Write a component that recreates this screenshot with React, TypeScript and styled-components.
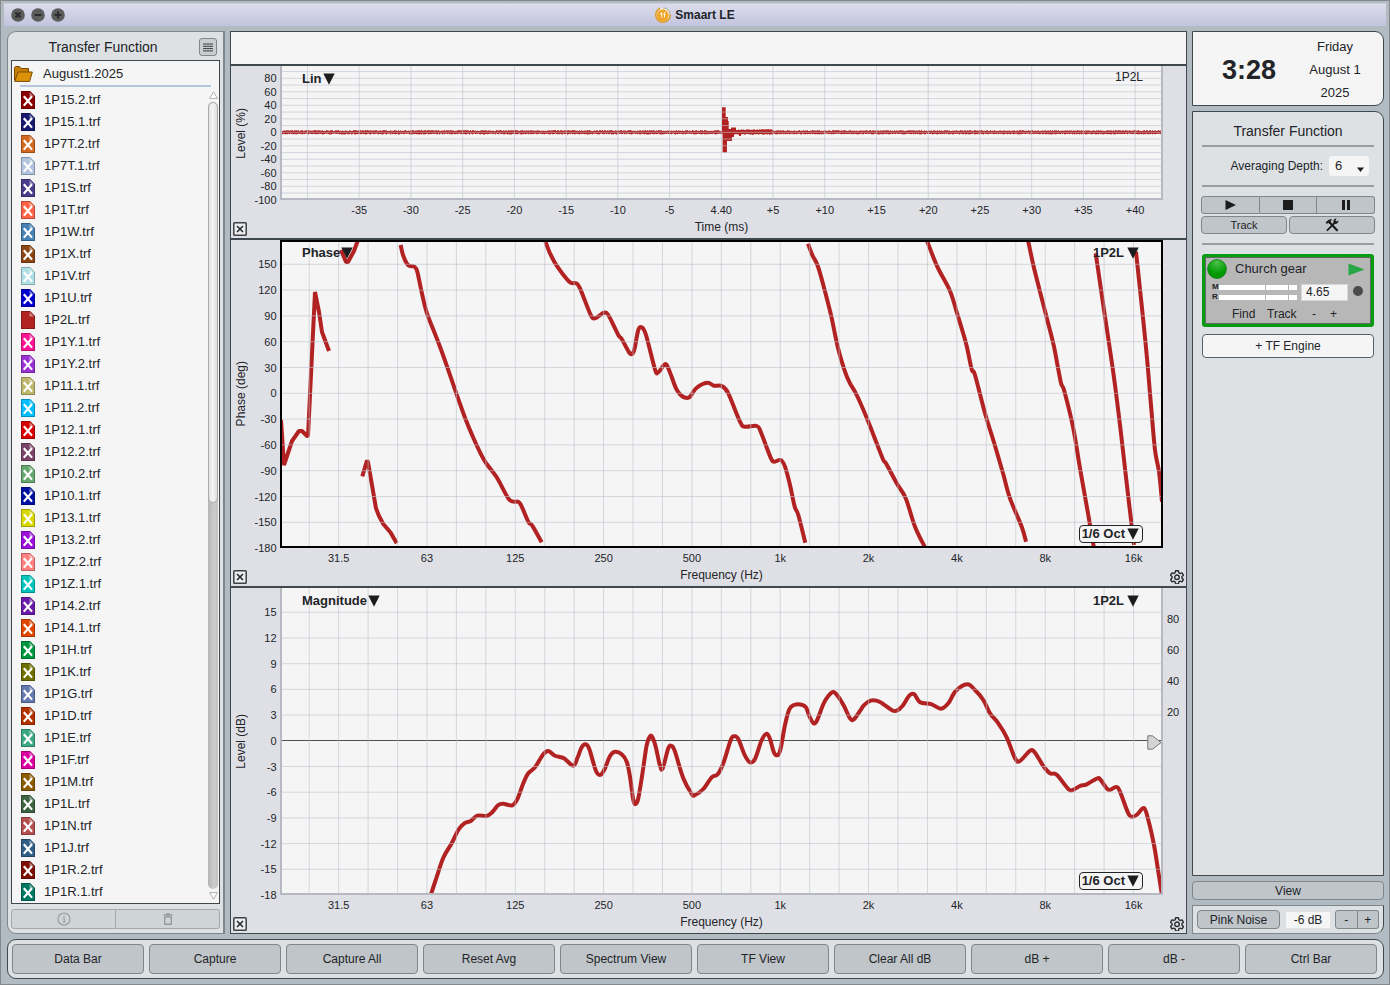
import React from "react";
import styled, { createGlobalStyle } from "styled-components";

const ink = "#222428";
const edge = "#3f484c";
const softEdge = "#7e878b";
const panel = "#dde1e4";
const control = "#bfc5c9";
const paper = "#f5f5f5";
const traceColor = "#b22222";

const GlobalStyle = createGlobalStyle`
  * { box-sizing: border-box; }
  body {
    margin: 0;
    color: ${ink};
    font-family: "Liberation Sans", Arial, Helvetica, sans-serif;
    font-size: 12px;
    line-height: 16px;
  }
  button, input, select { font: inherit; color: inherit; margin: 0; padding: 0; }
  svg { display: block; }
`;

/* ---------- window ---------- */

const Window = styled.div`
  min-height: 100vh;
  display: flex;
  flex-direction: column;
  padding: 2px 3px;
  background: #b2bbc1;
  border: 1px solid #83898d;
`;

const TitleBar = styled.header`
  position: relative;
  height: 23px;
  display: flex;
  align-items: center;
  justify-content: center;
  gap: 4px;
  border-top: 1px solid #c9cdd9;
  background: linear-gradient(#dcdcec, #c2c4de);
`;

const WindowTitle = styled.h1`
  margin: 0;
  font-size: 12px;
  font-weight: bold;
`;

const WindowButtons = styled.div`
  position: absolute;
  left: 7px;
  display: flex;
  gap: 6px;
`;

const WindowButton = styled.button`
  width: 14px;
  height: 14px;
  border: 0;
  background: none;
`;

const Workspace = styled.main`
  flex: 1;
  display: grid;
  grid-template-columns: 218px minmax(0, 1fr) 192px;
  gap: 5px;
  padding: 5px 2px 5px 3px;
`;

/* ---------- data bar ---------- */

const DataPanel = styled.section`
  display: flex;
  flex-direction: column;
  padding: 0 3px 4px;
  background: ${panel};
  border: 1px solid ${softEdge};
  border-right-width: 2px;
  border-radius: 9px 0 0 9px;
`;

const DataHeader = styled.div`
  height: 28px;
  display: flex;
  align-items: center;
  gap: 4px;
  padding: 2px 3px 0 0;
`;

const PanelTitle = styled.h2`
  flex: 1;
  margin: 0;
  text-align: center;
  font-size: 14px;
  font-weight: normal;
`;

const MenuButton = styled.button`
  width: 18px;
  height: 18px;
  display: grid;
  place-items: center;
  border: 1px solid ${softEdge};
  border-radius: 3px;
  background: #c9ced1;
`;

const DataBox = styled.div`
  flex: 1;
  background: ${paper};
  border: 1px solid ${edge};
`;

const FolderRow = styled.div`
  display: flex;
  align-items: center;
  gap: 10px;
  height: 26px;
  margin: 0 8px 2px 2px;
  font-size: 13px;
  position: relative;
  &::after {
    content: "";
    position: absolute;
    left: 6px;
    right: 0;
    bottom: 0;
    height: 2px;
    background: #b7c7da;
  }
`;

const FileArea = styled.div`
  display: flex;
`;

const FileList = styled.ul`
  flex: 1;
  margin: 0;
  padding: 0;
  list-style: none;
`;

const FileRow = styled.li`
  height: 22px;
  display: flex;
  align-items: center;
  gap: 9px;
  padding-left: 9px;
  font-size: 13px;
`;

const ScrollBar = styled.div`
  width: 12px;
  display: flex;
  flex-direction: column;
  align-items: center;
  gap: 3px;
  padding: 2px 0 3px;
`;

const ScrollTrack = styled.div`
  flex: 1;
  width: 10px;
  border-radius: 5px;
  background: linear-gradient(90deg, #b4b4b4, #cdcdcd 60%, #c0c0c0);
`;

const ScrollThumb = styled.div`
  height: 51%;
  border: 1px solid #a9a9a9;
  border-radius: 5px;
  background: linear-gradient(90deg, #e2e2e2, #f4f4f4 50%, #dcdcdc);
`;

const SplitRow = styled.div`
  display: flex;
`;

const DataFooter = styled(SplitRow)`
  margin-top: 5px;
`;

const SplitButton = styled.button<{ $h: number; $muted?: boolean }>`
  flex: 1;
  height: ${(p) => p.$h}px;
  display: grid;
  place-items: center;
  color: ${(p) => (p.$muted ? "#979d9f" : ink)};
  background: ${(p) => (p.$muted ? "#cfd4d7" : control)};
  border: 1px solid ${(p) => (p.$muted ? "#a3a9ac" : softEdge)};
  &:not(:first-child) { border-left-width: 0; }
  &:first-child { border-radius: 3px 0 0 3px; }
  &:last-child { border-radius: 0 3px 3px 0; }
`;

/* ---------- charts ---------- */

const ChartStack = styled.section`
  display: grid;
  grid-template-rows: 34px minmax(0, 174fr) minmax(0, 348fr) minmax(0, 345fr);
  border: 1px solid ${edge};
  background: #dfe0e6;
`;

const CursorStrip = styled.div`
  background: ${paper};
  border-bottom: 2px solid ${edge};
`;

/* Size containment: each panel takes its height from the stack, not from its drawings. */
const ChartPanel = styled.div<{ $last?: boolean }>`
  contain: size;
  display: grid;
  grid-template-columns: 49px minmax(0, 1fr) 23px;
  grid-template-rows: minmax(0, 1fr) 38px;
  border-bottom: ${(p) => (p.$last ? 0 : 2)}px solid ${edge};
`;

const YGutter = styled.div`
  display: flex;
  align-items: center;
  min-height: 0;
`;

const YTitle = styled.span`
  width: 20px;
  display: flex;
  align-items: center;
  justify-content: center;
  font-size: 12px;
  writing-mode: vertical-rl;
  transform: rotate(180deg);
`;

const TickLayer = styled.svg`
  width: 100%;
  height: 100%;
  overflow: visible;
  font-size: 11px;
  fill: ${ink};
`;

const YTicks = styled(TickLayer)`
  flex: 1;
  min-width: 0;
`;

const PlotBox = styled.div<{ $active?: boolean }>`
  position: relative;
  min-height: 0;
  background: ${paper};
  &::after {
    content: "";
    position: absolute;
    inset: 0;
    pointer-events: none;
    border: 2px solid ${(p) => (p.$active ? "#000" : "#b6b9c1")};
    border-top-width: ${(p) => (p.$active ? 2 : 0)}px;
  }
`;

const PlotSvg = styled.svg`
  position: absolute;
  inset: 0;
  width: 100%;
  height: 100%;
`;

const PlotMenu = styled.button<{ $at: "left" | "right" | "corner"; $gap?: number }>`
  position: absolute;
  z-index: 1;
  display: flex;
  align-items: center;
  gap: ${(p) => p.$gap ?? 1}px;
  height: 18px;
  font-size: 13px;
  font-weight: bold;
  background: ${(p) => (p.$at === "corner" ? paper : "none")};
  border: ${(p) => (p.$at === "corner" ? `1px solid ${ink}` : "0")};
  border-radius: 4px;
  padding: ${(p) => (p.$at === "corner" ? "0 3px 0 2px" : "0")};
  ${(p) => (p.$at === "left" ? "left: 22px;" : "")}
  ${(p) => (p.$at === "right" ? "right: 24px;" : "")}
  ${(p) => (p.$at === "corner" ? "right: 20px; bottom: 5px;" : "top: 4px;")}
`;

const PlotName = styled.span`
  position: absolute;
  z-index: 1;
  top: 3px;
  right: 20px;
  font-size: 12px;
`;

const LevelHandle = styled.svg`
  position: absolute;
  z-index: 1;
  right: 1px;
  top: 50%;
  margin-top: -7px;
`;

const AxisCorner = styled.div<{ $end?: boolean }>`
  display: flex;
  align-items: flex-end;
  justify-content: ${(p) => (p.$end ? "flex-end" : "flex-start")};
  padding: 2px;
`;

const IconButton = styled.button`
  border: 0;
  background: none;
`;

const XGutter = styled.div`
  display: flex;
  flex-direction: column;
`;

const XTicks = styled(TickLayer)`
  height: 19px;
`;

const XTitle = styled.span`
  text-align: center;
  font-size: 12px;
`;

/* ---------- control bar ---------- */

const ControlBar = styled.aside`
  display: flex;
  flex-direction: column;
  gap: 5px;
`;

const ClockCard = styled.div`
  height: 75px;
  display: grid;
  grid-template-columns: 1fr 1fr;
  align-items: center;
  padding: 2px 5px 0 13px;
  text-align: center;
  background: ${paper};
  border: 1px solid ${edge};
  border-radius: 0 9px 9px 0;
`;

const ClockTime = styled.time`
  font-size: 27px;
  line-height: 32px;
  font-weight: bold;
`;

const ClockDate = styled.div`
  font-size: 13px;
  line-height: 23px;
`;

const ControlPanel = styled.div`
  flex: 1;
  display: flex;
  flex-direction: column;
  padding: 10px 9px;
  background: ${panel};
  border: 1px solid ${edge};
  border-radius: 0 9px 0 0;
`;

const ControlTitle = styled.h2`
  margin: 0 0 5px;
  line-height: 18px;
  text-align: center;
  font-size: 14px;
  font-weight: normal;
`;

const Rule = styled.hr`
  width: 100%;
  height: 2px;
  margin: 0;
  border: 0;
  background: #979da0;
`;

const DepthRow = styled.label`
  height: 38px;
  display: flex;
  align-items: center;
  justify-content: flex-end;
  gap: 6px;
  padding-right: 5px;
`;

const SelectWrap = styled.span`
  position: relative;
  & svg { position: absolute; right: 5px; top: 11px; pointer-events: none; }
`;

const DepthSelect = styled.select`
  display: block;
  width: 40px;
  height: 20px;
  padding-left: 6px;
  font-size: 13px;
  appearance: none;
  border: 0;
  border-radius: 3px;
  background: ${paper};
`;

const Transport = styled.div`
  display: flex;
  flex-direction: column;
  gap: 2px;
  margin: 9px -1px;
`;

const PairRow = styled.div`
  display: grid;
  grid-template-columns: 1fr 1fr;
  gap: 2px;
`;

const Button = styled.button<{ $h: number; $size?: number; $light?: boolean }>`
  height: ${(p) => p.$h}px;
  display: grid;
  place-items: center;
  font-size: ${(p) => p.$size ?? 12}px;
  background: ${(p) => (p.$light ? paper : control)};
  border: 1px solid ${(p) => (p.$light ? "#596165" : softEdge)};
  border-radius: 4px;
`;

const EngineCard = styled.div`
  margin: 9px 0 7px;
  border: 3px solid #089c10;
  border-radius: 3px;
  background: #b7b7b7;
  box-shadow: inset 0 0 0 1px #5d6a5f;
  padding: 1px;
`;

const EngineHead = styled.div`
  height: 22px;
  display: grid;
  grid-template-columns: 20px 1fr 18px;
  align-items: center;
  gap: 8px;
  padding: 0 4px 0 1px;
  font-size: 13px;
`;

const EngineMeters = styled.div`
  height: 24px;
  display: flex;
  align-items: center;
  gap: 4px;
  padding: 0 6px;
`;

const MeterBlock = styled.div`
  display: flex;
  flex-direction: column;
`;

const MeterRow = styled.div`
  height: 10px;
  display: grid;
  grid-template-columns: 7px 78px;
  align-items: center;
  font-size: 8px;
  line-height: 10px;
  font-weight: bold;
`;

const MeterBar = styled.div`
  height: 5px;
  display: grid;
  grid-template-columns: 46px 22px 8px;
  gap: 1px;
  & > i { background: #fff; }
`;

const DelayInput = styled.input`
  width: 47px;
  height: 17px;
  padding: 0 4px;
  font-size: 12px;
  background: ${paper};
  border: 1px solid #d8d8d8;
`;

const EngineActions = styled.div`
  height: 19px;
  display: flex;
  align-items: center;
  padding-left: 26px;
`;

const TextButton = styled.button<{ $w: number }>`
  width: ${(p) => p.$w}px;
  height: 18px;
  text-align: left;
  border: 0;
  background: none;
`;

const GeneratorBox = styled.div`
  height: 29px;
  display: flex;
  align-items: center;
  padding: 0 4px;
  background: ${panel};
  border: 1px solid ${softEdge};
  border-right-color: ${edge};
  border-radius: 0 0 9px 0;
`;

const NoiseButton = styled(Button)`
  width: 83px;
`;

const GainOutput = styled.output`
  flex: 1;
  margin: 0 5px 0 6px;
  text-align: center;
  background: ${paper};
`;

const StepPair = styled(SplitRow)`
  width: 44px;
`;

/* ---------- command bar ---------- */

const CommandBar = styled.nav`
  display: grid;
  grid-template-columns: repeat(10, minmax(0, 1fr));
  gap: 5px;
  margin: 0 2px 3px 3px;
  padding: 4px 6px 4px 4px;
  background: ${panel};
  border: 1px solid ${edge};
  border-radius: 9px;
`;

/* ---------- data ---------- */

const files: [string, string][] = [
  ["1P15.2.trf", "#8b0000"],
  ["1P15.1.trf", "#191970"],
  ["1P7T.2.trf", "#d2691e"],
  ["1P7T.1.trf", "#b0c4de"],
  ["1P1S.trf", "#483d8b"],
  ["1P1T.trf", "#ff6347"],
  ["1P1W.trf", "#4682b4"],
  ["1P1X.trf", "#8b4513"],
  ["1P1V.trf", "#b0e0e6"],
  ["1P1U.trf", "#0000cd"],
  ["1P2L.trf", "#b22222"],
  ["1P1Y.1.trf", "#ff1493"],
  ["1P1Y.2.trf", "#9b32d2"],
  ["1P11.1.trf", "#bdb76b"],
  ["1P11.2.trf", "#00bfff"],
  ["1P12.1.trf", "#d80000"],
  ["1P12.2.trf", "#7a4468"],
  ["1P10.2.trf", "#66a870"],
  ["1P10.1.trf", "#0010a0"],
  ["1P13.1.trf", "#d8d800"],
  ["1P13.2.trf", "#9a10d8"],
  ["1P1Z.2.trf", "#ff8080"],
  ["1P1Z.1.trf", "#00c4bc"],
  ["1P14.2.trf", "#6a1aa8"],
  ["1P14.1.trf", "#e04800"],
  ["1P1H.trf", "#009640"],
  ["1P1K.trf", "#707000"],
  ["1P1G.trf", "#6478b0"],
  ["1P1D.trf", "#b43200"],
  ["1P1E.trf", "#3ca882"],
  ["1P1F.trf", "#dc00a0"],
  ["1P1M.trf", "#8c5a00"],
  ["1P1L.trf", "#3c6440"],
  ["1P1N.trf", "#b45050"],
  ["1P1J.trf", "#325f87"],
  ["1P1R.2.trf", "#7d0f05"],
  ["1P1R.1.trf", "#007864"],
];

const commands = [
  "Data Bar", "Capture", "Capture All", "Reset Avg", "Spectrum View",
  "TF View", "Clear All dB", "dB +", "dB -", "Ctrl Bar",
];

/* Horizontal extent of the trace coordinates. */
const X0 = 280;
const XW = 883;

type Tick = { at: number; text?: string };
type Scale = { top: number; height: number };

const impulseScale: Scale = { top: 66, height: 134 };
const phaseScale: Scale = { top: 240, height: 308 };
const magScale: Scale = { top: 588, height: 307 };

const px = (x: number) => `${((x - X0) / XW) * 100}%`;
const py = (s: Scale, y: number) => `${((y - s.top) / s.height) * 100}%`;

const range = (n: number) => Array.from({ length: n }, (_, i) => i);

const octaves = ["31.5", "63", "125", "250", "500", "1k", "2k", "4k", "8k", "16k"];
const freqTicks: Tick[] = range(29).map((i) => ({
  at: 309.2 + i * 29.44,
  text: i % 3 === 1 ? octaves[(i - 1) / 3] : undefined,
}));

const timeTicks: Tick[] = range(17).map((i) => {
  const ms = (i - 8) * 5;
  return {
    at: 721.3 + (i - 8) * 51.73,
    text: i === 0 ? undefined : ms === 0 ? "4.40" : ms > 0 ? `+${ms}` : `${ms}`,
  };
});

const percentTicks: Tick[] = range(20).map((i) => {
  const v = 90 - i * 10;
  return { at: 132.3 - v * 0.675, text: v % 20 === 0 ? `${v}` : undefined };
});

const phaseTicks: Tick[] = range(12).map((i) => ({ at: 264.3 + i * 25.8, text: `${150 - i * 30}` }));
const magTicks: Tick[] = range(12).map((i) => ({ at: 612.3 + i * 25.7, text: `${15 - i * 3}` }));
const coherenceTicks: Tick[] = range(4).map((i) => ({ at: 619 + i * 31, text: `${80 - i * 20}` }));

type Points = number[];

const phaseTraces: { smooth: boolean; pts: Points }[] = [
  { smooth: false, pts: [281, 420, 284, 465, 288, 453, 292, 441, 299, 431, 302, 431, 307, 436, 308, 436, 315, 292, 319, 312, 322, 332, 329, 351] },
  { smooth: false, pts: [341, 250, 346, 262, 348, 262, 354, 251, 358, 240] },
  { smooth: true, pts: [400.7, 245, 403, 255, 408, 265, 414.3, 266.7, 417.3, 271.7, 421.7, 292.3, 427, 313.3, 438.3, 342.3, 447.7, 368.3, 456.3, 393.3, 465, 417.7, 473.3, 437.7, 481.7, 455.7, 486.7, 464, 496.7, 477.3, 508.3, 498.3, 514.3, 501.7, 520, 503.3, 528.3, 521.7, 532.3, 525.7, 541.7, 542.3] },
  { smooth: false, pts: [362.3, 476.3, 367, 460.7, 368, 462, 371.7, 483.3, 376, 508.3, 379, 516, 383.3, 524, 390.7, 532.7, 396.7, 543.3] },
  { smooth: true, pts: [545, 240, 550, 253.3, 556.7, 265.7, 569.3, 281.7, 576, 283.3, 580, 288.3, 590.7, 315, 595, 318.3, 599.3, 315.7, 604, 312.7, 608.3, 315, 618.3, 335, 621.7, 339, 629.3, 352.7, 632.7, 353.3, 635, 346.7, 638.3, 330, 641.7, 327.3, 646, 335, 655, 369.3, 658.3, 372.3, 664, 365, 666.7, 365, 670.7, 374.3, 676, 388.3, 680.7, 395, 685.7, 397.7, 690, 396.7, 696.7, 387.7, 707.3, 382.7, 714, 385.7, 721.7, 386, 728.3, 393.3, 740, 421.7, 745, 426.7, 756.7, 426, 760.7, 431.7, 770.7, 457.7, 774.3, 461.7, 780.7, 460, 785, 466.7, 790, 485, 794.7, 506.7, 798.3, 515, 805.3, 542.7] },
  { smooth: true, pts: [808, 243.7, 812.3, 255, 817.7, 265.7, 823.3, 285, 831, 315, 837.7, 346.7, 845, 371.7, 850, 383.3, 856.7, 395, 868.3, 421.7, 876.7, 443.3, 883.3, 460, 886, 463.3, 897.3, 484.3, 905.7, 498.3, 915, 526.7, 925, 547.3] },
  { smooth: true, pts: [926.7, 240, 937.3, 266.7, 950, 291, 957.3, 314, 966, 343.3, 971.7, 369.3, 975, 375, 985, 413.3, 995, 445.7, 1003.3, 474.3, 1010, 498.3, 1021.7, 526.7, 1026, 541.7] },
  { smooth: true, pts: [1028, 240, 1033.3, 265, 1040, 291.7, 1047.3, 320, 1054, 346.7, 1060.7, 381.7, 1064.3, 391, 1073.3, 428.3, 1080, 468.3, 1088.3, 515, 1093.7, 546.7] },
  { smooth: true, pts: [1095.7, 253.3, 1104, 310, 1112.7, 368.3, 1120, 425, 1126.7, 483.3, 1134, 545] },
  { smooth: true, pts: [1136, 251.7, 1142, 308.3, 1146.7, 355, 1150.7, 401.7, 1155, 450, 1159, 471.7, 1162, 501.7] },
];

const magTrace: Points = [
  431, 894.3, 435.7, 880, 443.3, 857.7, 451.7, 843.3, 458.3, 830, 464.3, 823.3, 470.7, 821, 477.3, 815.7, 486.7, 816,
  491.7, 812.7, 498.3, 805, 503.3, 803.7, 512.3, 805.3, 517.7, 798.3, 523.3, 783.3, 528.3, 773.3, 535, 767.3,
  543.3, 754.3, 548.3, 751, 555, 755.7, 564, 758.3, 573.3, 765.7, 577.3, 758.3, 581.7, 747.3, 585.7, 744.3,
  589.3, 749, 596, 771, 600.7, 774.7, 605, 768.3, 610, 756, 615, 751.7, 621.7, 754.3, 626.7, 761.7, 630, 776.7,
  633.3, 800, 635.7, 804, 638.3, 798.3, 642.7, 771.7, 646.7, 745, 650, 736.3, 652.3, 737, 655.7, 746.7,
  660, 765.7, 662.7, 768.3, 668.3, 748.3, 671.7, 746, 675, 751.7, 683.3, 778.3, 691.7, 794, 695, 795,
  703.3, 789, 711.7, 777.3, 717.7, 774.3, 723.3, 763.3, 730.7, 740, 734.3, 736.3, 738.3, 739, 745, 755.7,
  750, 762.3, 755, 759, 761.7, 740, 766.7, 733.7, 770, 739, 774, 752.7, 778, 755, 780.7, 748.3, 785, 725,
  789.3, 709.3, 794, 705, 801.7, 704.7, 806, 707.3, 809.3, 716, 813.3, 723, 816.7, 721, 823.3, 704.3,
  828.3, 696, 833.3, 692, 838.3, 696.7, 844, 706, 850, 718.3, 854.3, 719, 863.3, 706, 868.3, 701.7,
  872.7, 700.3, 880, 702, 891.7, 710, 896.7, 710.7, 902.7, 705.7, 909.3, 695.7, 914.3, 694.3, 920, 702.3,
  931.7, 704.3, 941, 708.7, 948.3, 703.3, 955.7, 691, 967.3, 684.3, 975, 690, 983.3, 700, 990, 713.3,
  998.3, 723.3, 1006.7, 737.3, 1015, 758.3, 1020, 761, 1030, 750.7, 1035, 752.7, 1043.3, 766, 1050, 773.3,
  1056.7, 774.7, 1068.3, 789, 1072.7, 790, 1080, 786, 1086.7, 784.3, 1097.3, 778.3, 1100.7, 780,
  1108.3, 789.7, 1116, 787, 1120, 791.7, 1128.3, 813.3, 1132.7, 816.7, 1137.3, 814.3, 1144, 808,
  1148.3, 820, 1154, 845, 1158.3, 871.7, 1161.7, 893.3,
];

function linePath(p: Points) {
  let d = `M${p[0]} ${p[1]}`;
  for (let i = 2; i < p.length; i += 2) d += `L${p[i]} ${p[i + 1]}`;
  return d;
}

/* Catmull-Rom spline through the measured points. */
function splinePath(p: Points) {
  const n = p.length / 2;
  const at = (i: number) => {
    const k = Math.max(0, Math.min(n - 1, i));
    return [p[k * 2], p[k * 2 + 1]];
  };
  let d = `M${p[0]} ${p[1]}`;
  for (let i = 0; i < n - 1; i++) {
    const [a, b, c, e] = [at(i - 1), at(i), at(i + 1), at(i + 2)];
    const f = (v: number) => v.toFixed(1);
    d += `C${f(b[0] + (c[0] - a[0]) / 6)} ${f(b[1] + (c[1] - a[1]) / 6)} `;
    d += `${f(c[0] - (e[0] - b[0]) / 6)} ${f(c[1] - (e[1] - b[1]) / 6)} ${c[0]} ${c[1]}`;
  }
  return d;
}

/* Noise floor either side of the impulse: a thin band with a ragged edge. */
function noisePath() {
  let seed = 7;
  const rnd = () => {
    seed = (seed * 16807) % 2147483647;
    return seed / 2147483647;
  };
  let d = "";
  for (let x = 282; x < 1161; x++) {
    const late = x > 725;
    const tail = x > 730 && x < 773 ? 1 : 0;
    const up = 1.2 + rnd() * (late ? 0.8 : 0.9) + tail * 0.9;
    const down = 1.2 + rnd() * (late ? 0.8 : 0.9) + tail * 0.4;
    d += `M${x + 0.5} ${(132.2 - up).toFixed(1)}V${(132.4 + down).toFixed(1)}`;
  }
  return d;
}

/* ---------- drawings ---------- */

const Down = () => (
  <svg width="12" height="12" viewBox="0 0 12 12" aria-hidden="true">
    <path d="M0.3 0.5H11.7L6 11.7Z" fill="#1c1c1e" />
  </svg>
);

const CloseBox = () => (
  <svg width="14" height="14" viewBox="0 0 14 14" aria-hidden="true">
    <rect x="0.8" y="0.8" width="12.4" height="12.4" rx="0.8" fill="#eceef0" stroke="#3d4245" strokeWidth="1.5" />
    <path d="M4 4L10 10M10 4L4 10" stroke="#26292b" strokeWidth="1.6" />
  </svg>
);

const Gear = () => (
  <svg width="14" height="14" viewBox="0 0 24 24" fill="none" stroke="#2b2e31" strokeWidth="2.4" strokeLinejoin="round" aria-hidden="true">
    <path d="M9.6 1.3h4.8l.7 3.4 2.3 1.3 3.3-1.1 2.4 4.1-2.6 2.3v2.6l2.6 2.3-2.4 4.1-3.3-1.1-2.3 1.3-.7 3.4H9.6l-.7-3.4-2.3-1.3-3.3 1.1-2.4-4.1 2.6-2.3v-2.6L.9 9l2.4-4.1L6.6 6l2.3-1.3z" />
    <circle cx="12" cy="12.5" r="3.9" />
  </svg>
);

const FileIcon = ({ color, open }: { color: string; open: boolean }) => (
  <svg width="14" height="18" viewBox="0 0 14 18" aria-hidden="true">
    <path d="M0 0H9L14 5V18H0Z" fill={color} />
    <path d="M0.5 0.5H8.8L13.5 5.2V17.5H0.5Z" fill="none" stroke="#000" strokeOpacity="0.25" />
    <path d="M8.5 1V5.5H13Z" fill="#fff" fillOpacity="0.45" />
    {!open && <path d="M2.8 5.2L11 14.6M11 5.2L2.8 14.6" stroke="#fff" strokeWidth="2.2" />}
  </svg>
);

const FolderIcon = () => (
  <svg width="19" height="16" viewBox="0 0 19 16" stroke="#7a4c00" strokeLinejoin="round" aria-hidden="true">
    <path d="M0.5 14.5V1.5L1.5 0.5H5.5L7 2.5H14.5V6" fill="#c67e06" />
    <path d="M0.8 15.4L4 6H18.3L15.6 15.4Z" fill="#dd920a" />
  </svg>
);

const Logo = () => (
  <svg width="16" height="16" viewBox="0 0 16 16" aria-hidden="true">
    <circle cx="8" cy="8" r="7.6" fill="#f6f0e0" />
    <path d="M5.2 1.3A7.2 7.2 0 1 0 15.2 7.4" fill="none" stroke="#dd9a28" strokeWidth="1.6" />
    <path d="M8 0.8A7.2 7.2 0 0 1 15.2 8" fill="none" stroke="#b9b39f" strokeWidth="1.2" />
    <circle cx="7.8" cy="8.3" r="5.8" fill="#f0a322" />
    <path d="M6.4 5.2V9.4Q6.4 10.6 7.6 10.4M5.2 6.8H7.8M10.8 5.4Q9.4 5 9.4 6.4V10.6M8.6 7.6H10.6" fill="none" stroke="#fff" strokeWidth="0.9" />
  </svg>
);

const Hammer = () => (
  <svg width="14" height="14" viewBox="0 0 14 14" aria-hidden="true">
    <path d="M2.4 12.2L9.4 5.2" stroke="#1c1c1e" strokeWidth="1.8" strokeLinecap="round" />
    <path d="M8.4 4.4A3 3 0 0 1 11.6 0.6L10.4 2.4L11.6 3.6L13.4 2.6A3 3 0 0 1 9.6 5.8Z" fill="#1c1c1e" />
    <path d="M5 4.8L12 12.2" stroke="#1c1c1e" strokeWidth="2.2" strokeLinecap="round" />
    <path d="M0.6 4.6L3 2.2Q5 0.6 7.4 1.4L5.6 3L6.2 4.4L4.4 6L3.2 4.8L2 6Z" fill="#1c1c1e" />
  </svg>
);

/* ---------- chart pieces ---------- */

function YAxis({ title, ticks, scale }: { title: string; ticks: Tick[]; scale: Scale }) {
  return (
    <YGutter>
      <YTitle>{title}</YTitle>
      <YTicks>
        {ticks.filter((t) => t.text).map((t) => (
          <text key={t.text} x="88%" y={py(scale, t.at)} dy="4" textAnchor="end">{t.text}</text>
        ))}
      </YTicks>
    </YGutter>
  );
}

function XAxis({ title, ticks }: { title: string; ticks: Tick[] }) {
  return (
    <XGutter>
      <XTicks>
        {ticks.filter((t) => t.text).map((t) => (
          <text key={t.text} x={px(t.at)} y="14" textAnchor="middle">{t.text}</text>
        ))}
      </XTicks>
      <XTitle>{title}</XTitle>
    </XGutter>
  );
}

function Plot({ scale, xs, ys, children, zero }: {
  scale: Scale; xs: Tick[]; ys: Tick[]; children: React.ReactNode; zero?: number;
}) {
  return (
    <PlotSvg>
      {zero !== undefined && (
        <line x1="0" x2="100%" y1={py(scale, zero)} y2={py(scale, zero)} stroke="#4c5154" strokeWidth="1" shapeRendering="crispEdges" />
      )}
      <svg
        width="100%"
        height="100%"
        viewBox={`${X0} ${scale.top} ${XW} ${scale.height}`}
        preserveAspectRatio="none"
        fill="none"
        stroke={traceColor}
      >
        {children}
      </svg>
      <g stroke="#bcc1cc" strokeOpacity="0.6" strokeWidth="1">
        {ys.filter((t) => t.at !== zero).map((t) => (
          <line key={t.at} x1="0" x2="100%" y1={py(scale, t.at)} y2={py(scale, t.at)} />
        ))}
        {xs.map((t) => (
          <line key={t.at} x1={px(t.at)} x2={px(t.at)} y1="0" y2="100%" />
        ))}
      </g>
    </PlotSvg>
  );
}

function Corner({ gear }: { gear?: boolean }) {
  return (
    <AxisCorner $end={gear}>
      <IconButton aria-label={gear ? "Graph settings" : "Close graph"}>{gear ? <Gear /> : <CloseBox />}</IconButton>
    </AxisCorner>
  );
}

function ImpulseChart() {
  return (
    <ChartPanel>
      <YAxis title="Level (%)" ticks={percentTicks} scale={impulseScale} />
      <PlotBox>
        <Plot scale={impulseScale} xs={timeTicks} ys={percentTicks}>
          <path d={noisePath()} strokeWidth="1" />
          <path d="M722 132V107.3H725.7V117H728V121H728.7V129H731V127.5H736V130H760V129.5H772V134H741V136H739V134H734V137H732V141H727V152.5H722.6V132Z" fill={traceColor} stroke="none" />
        </Plot>
        <PlotMenu $at="left">Lin<Down /></PlotMenu>
        <PlotName>1P2L</PlotName>
      </PlotBox>
      <div />
      <Corner />
      <XAxis title="Time (ms)" ticks={timeTicks} />
      <div />
    </ChartPanel>
  );
}

function PhaseChart() {
  return (
    <ChartPanel>
      <YAxis title="Phase (deg)" ticks={phaseTicks} scale={phaseScale} />
      <PlotBox $active>
        <Plot scale={phaseScale} xs={freqTicks} ys={phaseTicks}>
          {phaseTraces.map((t, i) => (
            <path key={i} d={t.smooth ? splinePath(t.pts) : linePath(t.pts)} strokeWidth="4" vectorEffect="non-scaling-stroke" strokeLinejoin="bevel" />
          ))}
        </Plot>
        <PlotMenu $at="left">Phase<Down /></PlotMenu>
        <PlotMenu $at="right" $gap={3}>1P2L<Down /></PlotMenu>
        <PlotMenu $at="corner" $gap={2}>1/6 Oct<Down /></PlotMenu>
      </PlotBox>
      <div />
      <Corner />
      <XAxis title="Frequency (Hz)" ticks={freqTicks} />
      <Corner gear />
    </ChartPanel>
  );
}

function MagnitudeChart() {
  return (
    <ChartPanel $last>
      <YAxis title="Level (dB)" ticks={magTicks} scale={magScale} />
      <PlotBox>
        <Plot scale={magScale} xs={freqTicks} ys={magTicks} zero={magTicks[5].at}>
          <path d={splinePath(magTrace)} strokeWidth="4" vectorEffect="non-scaling-stroke" strokeLinejoin="round" />
        </Plot>
        <PlotMenu $at="left">Magnitude<Down /></PlotMenu>
        <PlotMenu $at="right" $gap={3}>1P2L<Down /></PlotMenu>
        <PlotMenu $at="corner" $gap={2}>1/6 Oct<Down /></PlotMenu>
        <LevelHandle width="15" height="15" viewBox="0 0 15 15" aria-hidden="true">
          <path d="M0.8 0.8H5.5L14 7.5L5.5 14.2H0.8Z" fill="#d4d4d4" stroke="#777" />
        </LevelHandle>
      </PlotBox>
      <TickLayer>
        {coherenceTicks.map((t) => (
          <text key={t.text} x="4" y={py(magScale, t.at)} dy="4">{t.text}</text>
        ))}
      </TickLayer>
      <Corner />
      <XAxis title="Frequency (Hz)" ticks={freqTicks} />
      <Corner gear />
    </ChartPanel>
  );
}

/* ---------- page sections ---------- */

function DataBar() {
  return (
    <DataPanel>
      <DataHeader>
        <PanelTitle>Transfer Function</PanelTitle>
        <MenuButton aria-label="Data menu">
          <svg width="10" height="9" viewBox="0 0 10 9" stroke="#3a4043" strokeWidth="1">
            <path d="M0 1H10M0 3.3H10M0 5.6H10M0 7.9H10" />
          </svg>
        </MenuButton>
      </DataHeader>
      <DataBox>
        <FolderRow><FolderIcon />August1.2025</FolderRow>
        <FileArea>
          <FileList>
            {files.map(([name, color]) => (
              <FileRow key={name}><FileIcon color={color} open={name === "1P2L.trf"} />{name}</FileRow>
            ))}
          </FileList>
          <ScrollBar>
            <svg width="9" height="8" viewBox="0 0 9 8"><path d="M4.5 0.8L8.4 7.4H0.6Z" fill="#fff" stroke="#b0b0b0" /></svg>
            <ScrollTrack><ScrollThumb /></ScrollTrack>
            <svg width="9" height="8" viewBox="0 0 9 8"><path d="M4.5 7.2L8.4 0.6H0.6Z" fill="#fff" stroke="#b0b0b0" /></svg>
          </ScrollBar>
        </FileArea>
      </DataBox>
      <DataFooter>
        <SplitButton $h={20} $muted disabled aria-label="Info">
          <svg width="14" height="14" viewBox="0 0 14 14" fill="none" stroke="currentColor" strokeWidth="1.1">
            <circle cx="7" cy="7" r="6" />
            <path d="M6 6H7.2V10M5.8 10H8.4M6.6 3.9H7.6" />
          </svg>
        </SplitButton>
        <SplitButton $h={20} $muted disabled aria-label="Delete">
          <svg width="10" height="12" viewBox="0 0 10 12" fill="none" stroke="currentColor" strokeWidth="1.4">
            <path d="M0.5 2H9.5M3 0.9H7M1.7 4H8.3V11.2H1.7Z" />
          </svg>
        </SplitButton>
      </DataFooter>
    </DataPanel>
  );
}

function Engine() {
  return (
    <EngineCard>
      <EngineHead>
        <svg width="20" height="20" viewBox="0 0 20 20" aria-hidden="true">
          <defs>
            <radialGradient id="lamp" cx="50%" cy="15%" r="60%">
              <stop offset="0" stopColor="#4cc24c" />
              <stop offset="1" stopColor="#009a00" />
            </radialGradient>
          </defs>
          <circle cx="10" cy="10" r="9.4" fill="url(#lamp)" stroke="#0a7a10" strokeWidth="0.8" />
        </svg>
        <span>Church gear</span>
        <svg width="17" height="13" viewBox="0 0 17 13" aria-hidden="true"><path d="M0.5 0.5L16.5 6.5L0.5 12.5Z" fill="#28a745" /></svg>
      </EngineHead>
      <EngineMeters>
        <MeterBlock>
          {["M", "R"].map((c) => (
            <MeterRow key={c}>{c}<MeterBar><i /><i /><i /></MeterBar></MeterRow>
          ))}
        </MeterBlock>
        <DelayInput aria-label="Delay (ms)" defaultValue="4.65" />
        <svg width="11" height="12" viewBox="0 0 11 12" aria-hidden="true"><circle cx="6" cy="5" r="5" fill="#4b4b4b" /></svg>
      </EngineMeters>
      <EngineActions>
        <TextButton $w={35}>Find</TextButton>
        <TextButton $w={45}>Track</TextButton>
        <TextButton $w={18} aria-label="Less delay">-</TextButton>
        <TextButton $w={18} aria-label="More delay">+</TextButton>
      </EngineActions>
    </EngineCard>
  );
}

function Controls() {
  return (
    <ControlBar>
      <ClockCard>
        <ClockTime>3:28</ClockTime>
        <ClockDate>Friday<br />August 1<br />2025</ClockDate>
      </ClockCard>
      <ControlPanel>
        <ControlTitle>Transfer Function</ControlTitle>
        <Rule />
        <DepthRow>
          Averaging Depth:
          <SelectWrap>
            <DepthSelect defaultValue="6"><option>4</option><option>6</option><option>8</option></DepthSelect>
            <svg width="7" height="5" viewBox="0 0 7 5"><path d="M0 0.5H7L3.5 5Z" fill="#1c1c1e" /></svg>
          </SelectWrap>
        </DepthRow>
        <Rule />
        <Transport>
          <SplitRow>
            <SplitButton $h={18} aria-label="Play"><svg width="11" height="10" viewBox="0 0 11 10"><path d="M0.5 0L11 5L0.5 10Z" fill="#1c1c1e" /></svg></SplitButton>
            <SplitButton $h={18} aria-label="Stop"><svg width="10" height="10" viewBox="0 0 10 10"><rect width="10" height="10" fill="#1c1c1e" /></svg></SplitButton>
            <SplitButton $h={18} aria-label="Pause"><svg width="8" height="10" viewBox="0 0 8 10"><path d="M0 0H3V10H0ZM5 0H8V10H5Z" fill="#1c1c1e" /></svg></SplitButton>
          </SplitRow>
          <PairRow>
            <Button $h={18} $size={11}>Track</Button>
            <Button $h={18} aria-label="Tools"><Hammer /></Button>
          </PairRow>
        </Transport>
        <Rule />
        <Engine />
        <Button $h={24} $light>+ TF Engine</Button>
      </ControlPanel>
      <Button $h={19}>View</Button>
      <GeneratorBox>
        <NoiseButton $h={19}>Pink Noise</NoiseButton>
        <GainOutput>-6 dB</GainOutput>
        <StepPair>
          <SplitButton $h={19} aria-label="Lower level">-</SplitButton>
          <SplitButton $h={19} aria-label="Raise level">+</SplitButton>
        </StepPair>
      </GeneratorBox>
    </ControlBar>
  );
}

const glyphs: [string, string][] = [
  ["Close", "M4.5 4.5L9.5 9.5M9.5 4.5L4.5 9.5"],
  ["Minimize", "M3.5 7H10.5"],
  ["Zoom", "M3.5 7H10.5M7 3.5V10.5"],
];

export default function App() {
  return (
    <Window>
      <GlobalStyle />
      <TitleBar>
        <WindowButtons>
          {glyphs.map(([label, d]) => (
            <WindowButton key={label} aria-label={label}>
              <svg width="14" height="14" viewBox="0 0 14 14">
                <circle cx="7" cy="7" r="6.8" fill="#5c5c5c" />
                <path d={d} stroke="#2c2c2e" strokeWidth="2" />
              </svg>
            </WindowButton>
          ))}
        </WindowButtons>
        <Logo />
        <WindowTitle>Smaart LE</WindowTitle>
      </TitleBar>
      <Workspace>
        <DataBar />
        <ChartStack>
          <CursorStrip />
          <ImpulseChart />
          <PhaseChart />
          <MagnitudeChart />
        </ChartStack>
        <Controls />
      </Workspace>
      <CommandBar>
        {commands.map((c) => (
          <Button key={c} $h={30}>{c}</Button>
        ))}
      </CommandBar>
    </Window>
  );
}
